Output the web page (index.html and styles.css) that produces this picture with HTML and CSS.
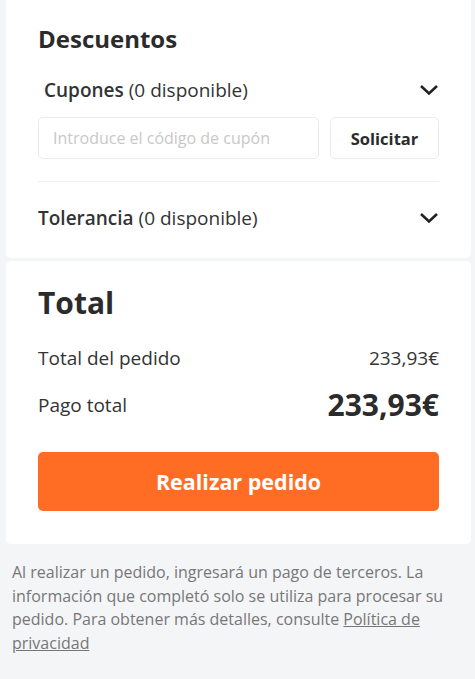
FILE: index.html
```html
<!DOCTYPE html>
<html lang="es">
<head>
    <meta charset="UTF-8">
    <meta name="viewport" content="width=device-width, initial-scale=1.0">
    <title>Pedido</title>
    <link rel="stylesheet" href="styles.css">
</head>
<body>

<div class="card discounts">
    <h2>Descuentos</h2>
    <div class="row coupons">
        <span><b>Cupones</b> (0 disponible)</span>
        <svg class="chevron" viewBox="0 0 20 12"><path d="M2 2 L10 9.5 L18 2"/></svg>
    </div>
    <div class="coupon-form">
        <input type="text" placeholder="Introduce el código de cupón">
        <button class="apply">Solicitar</button>
    </div>
    <div class="row tolerance">
        <span><b>Tolerancia</b> (0 disponible)</span>
        <svg class="chevron" viewBox="0 0 20 12"><path d="M2 2 L10 9.5 L18 2"/></svg>
    </div>
</div>

<div class="card total">
    <h2>Total</h2>
    <div class="row line">
        <span>Total del pedido</span>
        <span>233,93€</span>
    </div>
    <div class="row line pay">
        <span>Pago total</span>
        <span class="amount">233,93€</span>
    </div>
    <button class="order">Realizar pedido</button>
</div>

<p class="note">
    Al realizar un pedido, ingresará un pago de terceros. La información que completó solo se utiliza para procesar su pedido. Para obtener más detalles, consulte <a href="#">Política de privacidad</a>
</p>

</body>
</html>
```

FILE: styles.css
```css
body {
    font-family: "Open Sans", "Noto Sans", sans-serif;
    margin: 0;
    padding: 0;
    background-color: #f4f5f7;
    color: #333;
}

.card {
    background-color: #fff;
    margin: 0 4px 0 6px;
    border-radius: 5px;
    padding: 0 32px;
}

.card h2 {
    margin: 0;
    font-weight: 700;
    color: #2b2b2b;
}

.row {
    display: flex;
    justify-content: space-between;
    align-items: center;
}

.row b {
    font-weight: 600;
}

.chevron {
    width: 20px;
    height: 12px;
    fill: none;
    stroke: #222;
    stroke-width: 2.6;
}

.discounts {
    padding-top: 22px;
    padding-bottom: 27px;
    border-radius: 0 0 5px 5px;
}

.discounts h2 {
    font-size: 24px;
    line-height: 34px;
}

.coupons {
    font-size: 19px;
    margin-top: 21px;
    padding-left: 6px;
    line-height: 26px;
}

.coupon-form {
    display: flex;
    gap: 11px;
    margin-top: 14px;
    padding-bottom: 22px;
    border-bottom: 1px solid #f0f0f0;
}

.coupon-form input {
    flex: 1;
    height: 42px;
    box-sizing: border-box;
    border: 1px solid #ebebeb;
    border-radius: 5px;
    padding: 0 14px;
    font-family: inherit;
    font-size: 16px;
    color: #333;
    min-width: 0;
}

.coupon-form input::placeholder {
    color: #c8c8c8;
}

.coupon-form button.apply {
    width: 109px;
    height: 42px;
    background-color: #fff;
    border: 1px solid #ebebeb;
    border-radius: 5px;
    font-family: inherit;
    font-size: 16.5px;
    font-weight: 700;
    color: #2b2b2b;
    cursor: pointer;
}

.tolerance {
    font-size: 19px;
    line-height: 26px;
    margin-top: 23px;
}

.total {
    margin-top: 3px;
    padding-top: 22px;
    padding-bottom: 33px;
}

.total h2 {
    font-size: 30px;
    line-height: 40px;
}

.line {
    font-size: 19px;
    line-height: 26px;
    color: #333;
}

.total h2 + .line {
    margin-top: 22px;
}

.pay {
    margin-top: 16px;
}

.pay .amount {
    font-size: 30px;
    font-weight: 700;
    line-height: 36px;
    color: #2b2b2b;
}

.order {
    display: block;
    width: 100%;
    height: 59px;
    margin-top: 29px;
    background-color: #ff6d24;
    border: none;
    border-radius: 5px;
    color: #fff;
    font-family: inherit;
    font-size: 21.5px;
    font-weight: 700;
    cursor: pointer;
}

.note {
    margin: 0;
    padding: 17px 24px 20px 12px;
    font-size: 16px;
    line-height: 23.7px;
    color: #777;
}

.note a {
    color: #777;
}
```
